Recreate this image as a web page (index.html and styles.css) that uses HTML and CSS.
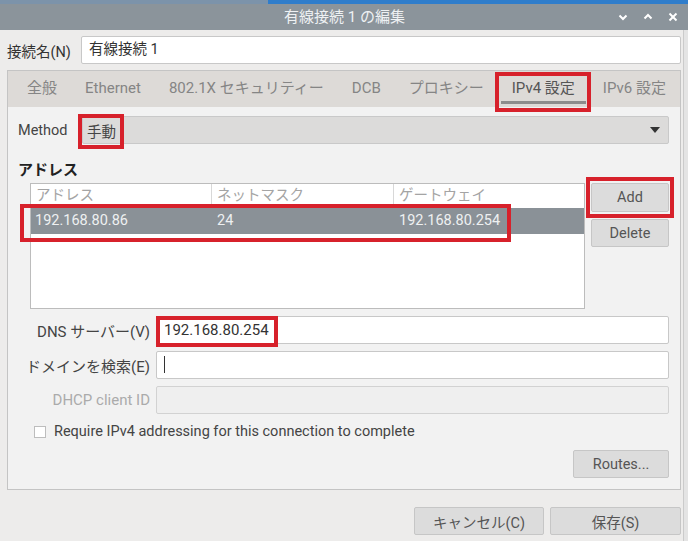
FILE: index.html
```html
<!DOCTYPE html>
<html lang="ja">
<head>
    <meta charset="UTF-8">
    <meta name="viewport" content="width=device-width, initial-scale=1.0">
    <title>有線接続 1 の編集</title>
    <link rel="stylesheet" href="styles.css">
</head>
<body>
    <div class="strip"></div>
    <div class="titlebar">
        <span class="title">有線接続 1 の編集</span>
        <div class="controls">
            <svg width="10" height="10" viewBox="0 0 10 10"><polyline points="1.5,3.5 5,7 8.5,3.5" /></svg>
            <svg width="10" height="10" viewBox="0 0 10 10"><polyline points="1.5,6.5 5,3 8.5,6.5" /></svg>
            <svg width="10" height="10" viewBox="0 0 10 10"><line x1="1.5" y1="1.5" x2="8.5" y2="8.5" /><line x1="8.5" y1="1.5" x2="1.5" y2="8.5" /></svg>
        </div>
    </div>
    <div class="window">
        <div class="name-row">
            <span class="name-label">接続名(N)</span>
            <div class="entry">有線接続 1</div>
        </div>

        <div class="notebook">
            <div class="tabs">
                <div class="tab">全般</div>
                <div class="tab">Ethernet</div>
                <div class="tab">802.1X セキュリティー</div>
                <div class="tab">DCB</div>
                <div class="tab">プロキシー</div>
                <div class="tab active">IPv4 設定<span class="mark mark-tab"></span></div>
                <div class="tab">IPv6 設定</div>
            </div>

            <div class="page">
                <div class="method-row">
                    <span class="method-label">Method</span>
                    <div class="combo">
                        <span class="combo-text">手動</span>
                        <svg class="combo-arrow" width="10" height="6" viewBox="0 0 10 6"><polygon points="0,0 10,0 5,6" /></svg>
                        <span class="mark mark-method"></span>
                    </div>
                </div>

                <div class="section-title">アドレス</div>

                <div class="addr-area">
                    <div class="addr-table">
                        <div class="row head">
                            <div class="cell">アドレス</div>
                            <div class="cell">ネットマスク</div>
                            <div class="cell">ゲートウェイ</div>
                        </div>
                        <div class="row selected">
                            <div class="cell">192.168.80.86</div>
                            <div class="cell">24</div>
                            <div class="cell">192.168.80.254</div>
                            <span class="mark mark-row"></span>
                        </div>
                    </div>
                    <div class="side-buttons">
                        <button class="btn btn-add">Add<span class="mark mark-add"></span></button>
                        <button class="btn btn-delete">Delete</button>
                    </div>
                </div>

                <div class="form-grid">
                    <span class="form-label">DNS サーバー(V)</span>
                    <div class="entry">192.168.80.254<span class="mark mark-dns"></span></div>
                    <span class="form-label">ドメインを検索(E)</span>
                    <div class="entry"><span class="cursor"></span></div>
                    <span class="form-label disabled">DHCP client ID</span>
                    <div class="entry disabled"></div>
                </div>

                <div class="check-row">
                    <span class="checkbox"></span>
                    <span>Require IPv4 addressing for this connection to complete</span>
                </div>

                <div class="routes-row">
                    <button class="btn btn-routes">Routes...</button>
                </div>
            </div>
        </div>

        <div class="actions">
            <button class="btn btn-cancel">キャンセル(C)</button>
            <button class="btn btn-save">保存(S)</button>
        </div>
    </div>
</body>
</html>
```

FILE: styles.css
```css
* {
    box-sizing: border-box;
}

body {
    margin: 0;
    width: 688px;
    height: 541px;
    overflow: hidden;
    background-color: #e4e4e4;
    font-family: Roboto, "Noto Sans CJK JP", sans-serif;
    font-size: 14.5px;
    color: #3c3c3c;
}

.strip {
    height: 4px;
    background: linear-gradient(to right, #7c93aa 0, #7c93aa 39%, #2f7dcb 39%, #2f7dcb 100%);
}

.titlebar {
    height: 26px;
    background-color: #8b949b;
    display: flex;
    align-items: center;
    justify-content: center;
    position: relative;
    color: #eef1f3;
    font-size: 15px;
}

.title {
    line-height: 26px;
    margin-left: 1px;
}

.controls {
    position: absolute;
    right: 10px;
    top: 8px;
    display: flex;
    gap: 15px;
}

.controls svg {
    display: block;
    stroke: #ffffff;
    stroke-width: 2;
    fill: none;
}

.window {
    width: 684px;
    height: 511px;
    background-color: #edeceb;
    border-right: 1px solid #cbcbcb;
    padding: 6px 2px 0 7px;
}

.name-row {
    display: flex;
    align-items: center;
    height: 28px;
}

.name-label {
    width: 74px;
    color: #333;
}

.entry {
    position: relative;
    flex: 1;
    height: 28px;
    line-height: 26px;
    padding-left: 7px;
    background-color: #ffffff;
    border: 1px solid #c8c8c8;
    border-radius: 2px;
    color: #333;
}

.form-grid .entry {
    font-size: 15px;
}

.entry.disabled {
    background-color: #efefef;
    border-color: #d2d2d2;
}

.cursor {
    display: inline-block;
    width: 1px;
    height: 17px;
    background-color: #333;
    vertical-align: middle;
    margin-top: -3px;
}

.notebook {
    margin-top: 6px;
    border: 1px solid #c4c4c4;
}

.tabs {
    height: 36px;
    display: flex;
    align-items: center;
    padding-left: 5px;
    background-color: #dddad7;
    font-size: 15px;
}

.tab {
    position: relative;
    height: 36px;
    line-height: 34px;
    padding: 0 14px;
    color: #858585;
    white-space: nowrap;
}

.tab.active {
    color: #555;
}

.tab.active::after {
    content: "";
    position: absolute;
    left: 3px;
    right: 3px;
    bottom: 3px;
    height: 3px;
    background-color: #8c8c8c;
}

.page {
    background-color: #f2f2f2;
    padding: 9px 11px 11px 10px;
}

.method-row {
    display: flex;
    align-items: center;
    height: 28px;
}

.method-label {
    width: 64px;
    color: #444;
}

.combo {
    position: relative;
    flex: 1;
    height: 28px;
    display: flex;
    align-items: center;
    justify-content: space-between;
    padding: 0 8px 0 4px;
    background-color: #dcdbda;
    border: 1px solid #c9c9c9;
    border-radius: 2px;
}

.combo-text {
    color: #444;
}

.combo-arrow {
    fill: #333;
}

.section-title {
    margin-top: 16px;
    font-weight: bold;
    font-size: 15px;
    line-height: 20px;
    color: #222;
}

.addr-area {
    display: flex;
    gap: 6px;
    margin-top: 3px;
    padding-left: 12px;
}

.addr-table {
    width: 555px;
    height: 126px;
    background-color: #ffffff;
    border: 1px solid #bcbcbc;
}

.row {
    position: relative;
    display: flex;
}

.row .cell {
    padding-left: 5px;
}

.row .cell:nth-child(1) { width: 180px; }
.row .cell:nth-child(2) { width: 182px; }
.row .cell:nth-child(3) { flex: 1; }

.row.head {
    height: 24px;
    line-height: 23px;
    color: #a4a4a4;
}

.row.head .cell + .cell {
    border-left: 1px solid #d8d8d8;
}

.row.selected {
    height: 26px;
    line-height: 26px;
    background-color: #8a9197;
    color: #eef0f1;
}

.row.selected .cell:nth-child(1) { padding-left: 4px; }
.row.selected .cell:nth-child(2) { padding-left: 6px; }
.row.selected .cell:nth-child(3) { padding-left: 6px; }

.side-buttons {
    display: flex;
    flex-direction: column;
    gap: 7px;
}

.btn {
    position: relative;
    height: 28px;
    padding: 0;
    font-family: Roboto, "Noto Sans CJK JP", sans-serif;
    font-size: 14.5px;
    color: #555;
    background-color: #dcdcdc;
    border: 1px solid #c6c6c6;
    border-radius: 2px;
}

.btn-add,
.btn-delete {
    width: 78px;
}

.btn-add {
    height: 29px;
}

.form-grid {
    display: grid;
    grid-template-columns: 132px 1fr;
    column-gap: 6px;
    row-gap: 7px;
    align-items: center;
    margin-top: 7px;
}

.form-label {
    text-align: right;
    color: #444;
    white-space: nowrap;
    font-size: 15px;
}

.form-label.disabled {
    color: #ababab;
}

.check-row {
    display: flex;
    align-items: center;
    gap: 8px;
    margin-top: 8px;
    padding-left: 16px;
    color: #444;
    line-height: 20px;
}

.checkbox {
    width: 12px;
    height: 12px;
    background-color: #ffffff;
    border: 1px solid #bdbdbd;
}

.routes-row {
    display: flex;
    justify-content: flex-end;
    margin-top: 8px;
}

.btn-routes {
    width: 96px;
}

.actions {
    display: flex;
    justify-content: flex-end;
    gap: 6px;
    margin-top: 17px;
}

.btn-cancel {
    width: 130px;
}

.btn-save {
    width: 131px;
}

/* red annotation frames */
.mark {
    position: absolute;
    border: 4px solid #d7212b;
    pointer-events: none;
}

.mark-tab {
    left: -3px;
    right: -2px;
    top: 1px;
    bottom: -5px;
}

.mark-method {
    left: -5px;
    top: -3px;
    width: 46px;
    height: 35px;
}

.mark-row {
    left: -11px;
    top: -4px;
    width: 491px;
    height: 38px;
}

.mark-add {
    left: -6px;
    top: -7px;
    width: 88px;
    height: 41px;
}

.mark-dns {
    left: -1px;
    top: -1px;
    width: 122px;
    height: 31px;
}
```
